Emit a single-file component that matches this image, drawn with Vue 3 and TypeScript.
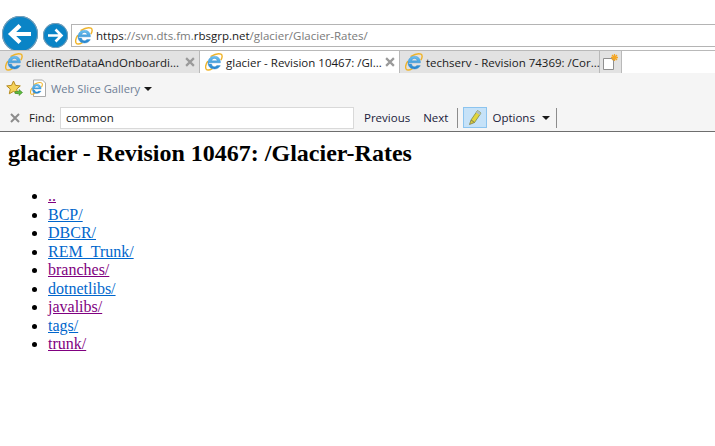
<template>
  <div class="browser">
    <svg width="0" height="0" class="defs">
      <defs>
        <linearGradient id="ie-blue" x1="0" y1="0" x2="0" y2="1">
          <stop offset="0" stop-color="#6cc2f0" />
          <stop offset="1" stop-color="#2383cc" />
        </linearGradient>
        <symbol id="ie" viewBox="0 0 18 18">
          <path d="M2.800 8.200C1 10.800.1 13.800 1 15.800c1 1.700 3.800 1.300 6.400-.2M5.500 3.500C9 1.500 13.800.2 16 1.200c1.700.9 1.300 3.500-.1 6" fill="none" stroke="#f0b429" stroke-width="1.400" />
          <path d="M3.600 9.800h11.800C15.700 6 13.200 3.200 9.500 3.200 5.700 3.200 3 6 3 9.800c0 3.700 2.700 6.200 6.500 6.200 2.700 0 4.800-1.200 5.800-3.400h-3.600c-.5.800-1.200 1.200-2.200 1.200-1.600 0-2.700-1-2.900-2.700h-3z M6.600 7.800c.2-1.400 1.400-2.400 2.900-2.400s2.600 1 2.800 2.400z" fill="url(#ie-blue)" fill-rule="evenodd" stroke="#2a86cc" stroke-width=".4" />
        </symbol>
      </defs>
    </svg>

    <header class="chrome">
      <div class="nav-row">
        <button class="nav-btn back">
          <svg width="26" height="22" viewBox="0 0 26 22"><path d="M24 11H5M13 2.500 4 11l9 8.500" fill="none" stroke="#fff" stroke-width="4.200" /></svg>
        </button>
        <button class="nav-btn forward">
          <svg width="17" height="15" viewBox="0 0 17 15"><path d="M1 7.500h13M8.500 1.500l6 6-6 6" fill="none" stroke="#fff" stroke-width="2.600" /></svg>
        </button>
        <div class="address">
          <svg class="ie-addr" width="18" height="18"><use href="#ie" /></svg>
          <span class="url"><b>https</b>://svn.dts.fm.<b>rbsgrp.net</b>/glacier/Glacier-Rates/</span>
        </div>
      </div>

      <div class="tab-row">
        <div v-for="tab in tabs" :key="tab.title" class="tab" :class="{ active: tab.active }">
          <svg class="tab-icon" width="18" height="18"><use href="#ie" /></svg>
          <span class="tab-title">{{ tab.title }}</span>
          <svg v-if="tab.close" class="tab-close" width="10" height="10" viewBox="0 0 9 9"><path d="M1 1l7 7M8 1 1 8" stroke="#9a9a9a" stroke-width="2" /></svg>
        </div>
        <div class="new-tab">
          <svg width="18" height="18" viewBox="0 0 18 18">
            <path d="M1.500 5.500h10v11h-10z" fill="#fff" stroke="#8f8f8f" />
            <path d="M12.500 1v7M9 4.500h7M10 2l5 5M15 2l-5 5" stroke="#f5a623" stroke-width="1.300" />
          </svg>
        </div>
      </div>

      <div class="command-bar">
        <div class="fav-row">
          <svg class="star" width="17" height="17" viewBox="0 0 17 17">
            <path d="M7.500 1l2 4.400 4.800.5-3.600 3.200 1 4.700-4.200-2.400-4.200 2.400 1-4.700L.7 5.900l4.800-.5z" fill="#f5d25a" stroke="#b58a1e" />
            <path d="M9 11.500h4V9.500l3.500 3-3.500 3v-2H9z" fill="#5dbb3f" stroke="#3d8a28" stroke-width=".6" />
          </svg>
          <svg class="page-icon" width="17" height="19" viewBox="0 0 17 19">
            <path d="M3.500 1h9l3 3v13.500h-12z" fill="#fff" stroke="#a9a9a9" />
            <use href="#ie" x="0" y="3" width="13" height="13" />
          </svg>
          <span class="gallery">Web Slice Gallery</span>
          <span class="caret"></span>
        </div>

        <div class="find-row">
          <svg class="find-close" width="10" height="10" viewBox="0 0 10 10"><path d="M1 1l8 8M9 1 1 9" stroke="#8c8c8c" stroke-width="2" /></svg>
          <span class="find-label">Find:</span>
          <div class="find-input">common</div>
          <span class="find-link prev">Previous</span>
          <span class="find-link next">Next</span>
          <span class="divider"></span>
          <span class="highlight">
            <svg width="18" height="19" viewBox="0 0 18 19">
              <path d="M11.500 2.500 15 5 8.500 14.500 5 12z" fill="#e2d63a" stroke="#8f9a5a" />
              <path d="M11.500 2.500 15 5l-1.500 2L10 4.500z" fill="#aebdc4" />
              <path d="M5 12l-1.500 4.500 5-2z" fill="#d8c83a" stroke="#7f7f4a" stroke-width=".8" />
            </svg>
          </span>
          <span class="find-link options">Options</span>
          <span class="caret"></span>
          <span class="divider last"></span>
        </div>
      </div>
    </header>

    <main class="page">
      <h1>glacier - Revision 10467: /Glacier-Rates</h1>
      <ul>
        <li v-for="item in items" :key="item.name">
          <a href="#" :class="{ visited: item.visited }">{{ item.name }}</a>
        </li>
      </ul>
    </main>
  </div>
</template>

<script setup lang="ts">
const tabs = [
  { title: 'clientRefDataAndOnboardi...', close: true, active: false },
  { title: 'glacier - Revision 10467: /Gl...', close: true, active: true },
  { title: 'techserv - Revision 74369: /Cor...', close: false, active: false },
]

const items = [
  { name: '..', visited: true },
  { name: 'BCP/', visited: false },
  { name: 'DBCR/', visited: false },
  { name: 'REM_Trunk/', visited: false },
  { name: 'branches/', visited: true },
  { name: 'dotnetlibs/', visited: false },
  { name: 'javalibs/', visited: true },
  { name: 'tags/', visited: false },
  { name: 'trunk/', visited: true },
]
</script>

<style>
html, body { margin: 0; background: #fff; }
</style>

<style scoped>
.browser { width: 715px; height: 446px; overflow: hidden; background: #fff; }
.defs { position: absolute; }
.chrome { font-family: "Open Sans", "Noto Sans", sans-serif; font-size: 11.5px; color: #1a1a1a; }

.nav-row { height: 50px; display: flex; align-items: flex-end; padding-left: 2px; box-sizing: border-box; overflow: hidden; }
.nav-btn { flex: none; border: 0; padding: 0; border-radius: 50%; background: #0a84c6; display: flex; align-items: center; justify-content: center; box-shadow: inset 0 0 0 1px #7f9fb5; }
.back { width: 36px; height: 36px; margin-bottom: -2px; }
.forward { width: 25px; height: 25px; margin: 0 3px 2px 5px; }
.address { flex: 1; height: 23px; margin-bottom: 3px; display: flex; align-items: center; gap: 3px; padding-left: 3px; border: 1px solid #b4b4b4; border-right: 0; box-sizing: border-box; }
.url { color: #7a7a7a; }
.url b { font-weight: 400; color: #1a1a1a; }

.tab-row { height: 23px; display: flex; border-top: 1px solid #b9b9b9; box-sizing: border-box; }
.tab { flex: none; width: 200px; display: flex; align-items: center; gap: 3px; padding: 0 4px 0 5px; box-sizing: border-box; background: #e2e2e2; border-right: 1px solid #b9b9b9; }
.tab.active { background: #fff; }
.tab-icon, .tab-close { flex: none; }
.tab-title { flex: 1; min-width: 0; white-space: nowrap; }
.new-tab { flex: none; width: 22px; display: flex; align-items: center; justify-content: center; background: #e2e2e2; border-right: 1px solid #b9b9b9; box-sizing: border-box; }

.command-bar { height: 58px; background: #f5f5f5; border-bottom: 1px solid #6e6e6e; }
.fav-row { height: 31px; display: flex; align-items: center; padding-left: 6px; }
.star { margin-right: 7px; }
.page-icon { margin-right: 4px; }
.gallery { color: #6f7f95; font-size: 11.2px; margin-right: 4px; }
.caret { width: 0; height: 0; border: 4px solid transparent; border-top: 4px solid #1a1a1a; border-bottom: 0; }
.find-row { height: 27px; display: flex; align-items: center; padding-left: 10px; }
.find-label { margin-left: 9px; width: 31px; }
.find-input { width: 294px; height: 22px; box-sizing: border-box; border: 1px solid #d9d9d9; background: #fff; padding-left: 5px; line-height: 20px; }
.find-link { color: #1a1a3a; }
.prev { margin-left: 10px; }
.next { margin-left: 13px; }
.divider { width: 1px; height: 20px; background: #8c8c8c; margin-left: 9px; }
.highlight { width: 24px; height: 21px; margin-left: 5px; box-sizing: border-box; background: #c6e2f8; border: 1px solid #8cc4ef; display: flex; align-items: center; justify-content: center; }
.options { margin-left: 5px; margin-right: 7px; }
.last { margin-left: 6px; }

.page { font-family: "Liberation Serif", "Times New Roman", serif; font-size: 16px; padding: 8px; color: #000; }
h1 { font-size: 24px; margin: 0 0 20px; font-weight: 700; }
ul { margin: 0; padding-left: 40px; }
li { line-height: 18.5px; }
a { color: #0066cc; }
a.visited { color: #800080; }
</style>
